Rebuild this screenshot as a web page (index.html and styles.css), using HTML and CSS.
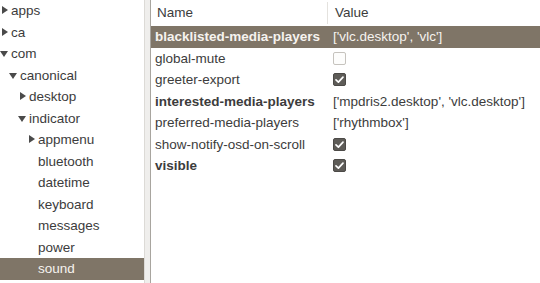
FILE: index.html
```html
<!DOCTYPE html>
<html>
<head>
<meta charset="utf-8">
<link rel="stylesheet" href="styles.css">
</head>
<body>
<div class="window">
  <div class="tree">
    <div class="node l0"><span class="arrow right"></span>apps</div>
    <div class="node l0"><span class="arrow right"></span>ca</div>
    <div class="node l0"><span class="arrow down"></span>com</div>
    <div class="node l1"><span class="arrow down"></span>canonical</div>
    <div class="node l2"><span class="arrow right"></span>desktop</div>
    <div class="node l2"><span class="arrow down"></span>indicator</div>
    <div class="node l3"><span class="arrow right"></span>appmenu</div>
    <div class="node l3"><span class="arrow none"></span>bluetooth</div>
    <div class="node l3"><span class="arrow none"></span>datetime</div>
    <div class="node l3"><span class="arrow none"></span>keyboard</div>
    <div class="node l3"><span class="arrow none"></span>messages</div>
    <div class="node l3"><span class="arrow none"></span>power</div>
    <div class="node l3 selected"><span class="arrow none"></span>sound</div>
  </div>
  <div class="handle"></div>
  <div class="list">
    <div class="header">
      <div class="hcell name-col">Name</div>
      <div class="hcell value-col">Value</div>
    </div>
    <div class="row selected">
      <div class="cell name-col bold">blacklisted-media-players</div>
      <div class="cell value-col">['vlc.desktop', 'vlc']</div>
    </div>
    <div class="row">
      <div class="cell name-col">global-mute</div>
      <div class="cell value-col"><span class="check"></span></div>
    </div>
    <div class="row">
      <div class="cell name-col">greeter-export</div>
      <div class="cell value-col"><span class="check on"><svg viewBox="0 0 13 13" width="13" height="13"><path d="M3 6.8 L5.4 9.1 L10 4.2" fill="none" stroke="#fff" stroke-width="1.7" stroke-linecap="round" stroke-linejoin="round"/></svg></span></div>
    </div>
    <div class="row">
      <div class="cell name-col bold">interested-media-players</div>
      <div class="cell value-col">['mpdris2.desktop', 'vlc.desktop']</div>
    </div>
    <div class="row">
      <div class="cell name-col">preferred-media-players</div>
      <div class="cell value-col">['rhythmbox']</div>
    </div>
    <div class="row">
      <div class="cell name-col">show-notify-osd-on-scroll</div>
      <div class="cell value-col"><span class="check on"><svg viewBox="0 0 13 13" width="13" height="13"><path d="M3 6.8 L5.4 9.1 L10 4.2" fill="none" stroke="#fff" stroke-width="1.7" stroke-linecap="round" stroke-linejoin="round"/></svg></span></div>
    </div>
    <div class="row">
      <div class="cell name-col bold">visible</div>
      <div class="cell value-col"><span class="check on"><svg viewBox="0 0 13 13" width="13" height="13"><path d="M3 6.8 L5.4 9.1 L10 4.2" fill="none" stroke="#fff" stroke-width="1.7" stroke-linecap="round" stroke-linejoin="round"/></svg></span></div>
    </div>
  </div>
</div>
</body>
</html>
```
FILE: styles.css
```css
html, body {
  margin: 0;
  padding: 0;
  background: #fff;
}
body {
  font-family: "Liberation Sans", Arial, sans-serif;
  font-size: 13.5px;
  color: #3c3c3c;
}
.window {
  display: flex;
  width: 540px;
  height: 283px;
  overflow: hidden;
}
.tree {
  width: 144px;
  flex: none;
  background: #fff;
  border-right: 1px solid #dcdad6;
}
.node {
  height: 21.5px;
  line-height: 21.5px;
  display: flex;
  align-items: center;
  white-space: nowrap;
}
.node.l0 { padding-left: 0; }
.node.l1 { padding-left: 9px; }
.node.l2 { padding-left: 18px; }
.node.l3 { padding-left: 27px; }
.node.selected {
  background: #7f7567;
  color: #f6f3ef;
}
.arrow {
  width: 11px;
  height: 21px;
  flex: none;
  position: relative;
}
.arrow.right::before {
  content: "";
  position: absolute;
  left: 2px;
  top: 6px;
  border-left: 6px solid #4a4a4a;
  border-top: 4.5px solid transparent;
  border-bottom: 4.5px solid transparent;
}
.arrow.down::before {
  content: "";
  position: absolute;
  left: 0;
  top: 8px;
  border-top: 6px solid #4a4a4a;
  border-left: 4.5px solid transparent;
  border-right: 4.5px solid transparent;
}
.handle {
  width: 5px;
  flex: none;
  background: #efeeec;
  border-right: 1px solid #a8a59f;
}
.list {
  flex: 1;
  background: #fff;
}
.header {
  display: flex;
  height: 26px;
  align-items: center;
}
.hcell {
  height: 26px;
  line-height: 26px;
}
.hcell.name-col {
  width: 170px;
  padding-left: 6px;
  border-right: 1px solid #e4e2de;
  height: 22px;
  line-height: 22px;
}
.hcell.value-col {
  padding-left: 7px;
}
.row {
  display: flex;
  height: 21.5px;
  align-items: center;
}
.row.selected {
  background: #7f7567;
  color: #f6f3ef;
}
.cell {
  white-space: nowrap;
}
.cell.name-col {
  width: 173px;
  padding-left: 4px;
  flex: none;
}
.cell.value-col {
  padding-left: 5px;
  display: flex;
  align-items: center;
}
.bold {
  font-weight: bold;
}
.check {
  display: inline-block;
  width: 11px;
  height: 11px;
  border: 1px solid #c6c3be;
  border-radius: 2px;
  background: #fdfdfc;
  position: relative;
}
.check.on {
  background: #5e5c58;
  border-color: #4c4a47;
}
.check svg {
  position: absolute;
  left: -1px;
  top: -1px;
}
```
